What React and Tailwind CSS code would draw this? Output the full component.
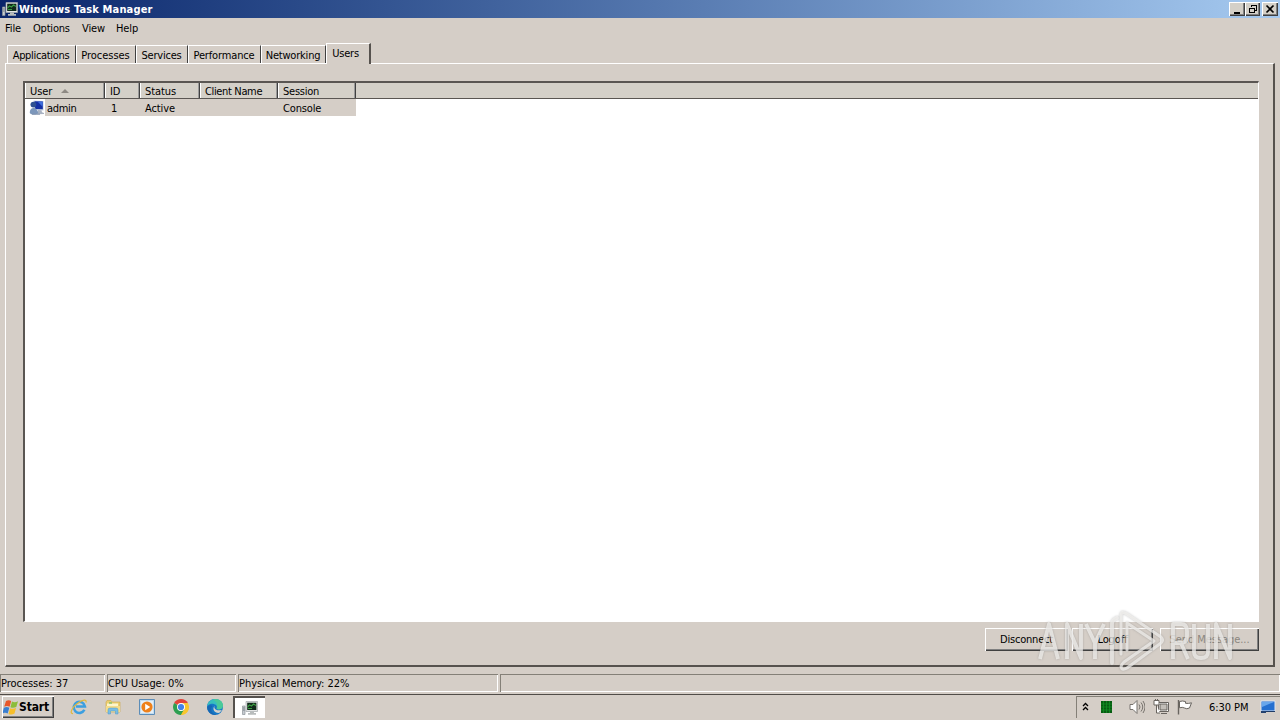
import clsx from 'clsx';

const raised = 'shadow-[inset_1px_1px_0_#fff,inset_-1px_-1px_0_#404040,inset_-2px_-2px_0_#808080]';
const sunken = 'shadow-[inset_1px_1px_0_#848078,inset_-1px_-1px_0_#fff]';

const tabs = [
  { label: 'Applications', box: 'w-[69px] tracking-[-0.32px]' },
  { label: 'Processes', box: 'w-[60px] tracking-[-0.05px]' },
  { label: 'Services', box: 'w-[52px] tracking-[-0.2px]' },
  { label: 'Performance', box: 'w-[73px] tracking-[-0.15px]' },
  { label: 'Networking', box: 'w-[65px] tracking-[-0.2px]' },
];

const columns = [
  { label: 'User', box: 'w-20', sorted: true },
  { label: 'ID', box: 'w-[35px]' },
  { label: 'Status', box: 'w-[60px]' },
  { label: 'Client Name', box: 'w-[78px] tracking-[-0.35px]' },
  { label: 'Session', box: 'w-[78px] tracking-[-0.25px]' },
];

const MonitorIcon = ({ className }) => (
  <svg viewBox="0 0 16 16" className={clsx('h-4 w-4 shrink-0', className)}>
    <path d="M0.5 6h2.5v8.5H.5z" fill="#c6cbd0" stroke="#8d9398" strokeWidth=".7" />
    <path d="M1 8h1.6M1 10h1.6" stroke="#4c555c" strokeWidth=".7" />
    <path d="M4 1.5h11.5v10H4z" fill="#e3e5e5" stroke="#a2a7aa" strokeWidth=".7" />
    <path d="M5.2 2.7h9.2v7.3H5.2z" fill="#10291a" />
    <path d="M5.5 7l2-2 2 1 2-2 2.5 1.5M6 8.5h4" stroke="#3b9b43" strokeWidth="1.1" fill="none" />
    <path d="M8 11.5h4v1.5h2v1.7H6V13h2z" fill="#b8bcbc" />
  </svg>
);

const UserIcon = () => (
  <svg viewBox="0 0 16 16" className="h-4 w-4 shrink-0">
    <path d="M4.5 0.5l10 .4v9.6l-9.2-.6z" fill="#c3cde0" />
    <path d="M5.5 1.2l8.3.4v7.7l-7.6-.4z" fill="#1430a4" />
    <path d="M8.5 1.6l5.3.2-.2 5z" fill="#3f6ddc" />
    <path d="M9 10l3.5.3.5 2 2 .6v1l-7 .4z" fill="#a9b3c3" />
    <circle cx="4.4" cy="4.6" r="2.9" fill="#2e5192" />
    <path d="M0.8 13c0-4 2-5 4-5s4 2 4.5 5c-2 2-7 2-8.5 0z" fill="#7c97bb" />
    <path d="M3 14.2h8" stroke="#8091ab" />
  </svg>
);

const StartIcon = () => (
  <svg viewBox="0 0 16 15" className="h-[15px] w-4 shrink-0">
    <path d="M3 1c2-1.2 3.7-1 5.2 0L6.6 6.8c-1.8-1-3.4-1-5.4 0z" fill="#e8572a" />
    <path d="M9 1.5c1.8 1 3.8.9 6-.2l-1.7 5.6c-2 1-4 1.1-5.9.3z" fill="#8cbd3c" />
    <path d="M.9 7.8c2-1 3.7-.9 5.4 0l-1.6 5.8c-1.5-1-3.4-1-5.4.1z" fill="#3b7fd0" />
    <path d="M7.1 8.2c1.9.9 3.8.8 5.9-.2l-1.5 5.6c-2.1 1.1-4.2 1.1-6 .3z" fill="#f6be2b" />
  </svg>
);

const ExplorerEIcon = () => (
  <svg viewBox="0 0 18 18" className="h-[18px] w-[18px]">
    <path d="M14.4 11.8a5.6 5.6 0 1 1 .5-3.3H6" fill="none" stroke="#3c9fe0" strokeWidth="2.6" />
    <path d="M3 15.5C-1 16 2 9 8 5c5-3.5 9-4 8-.5" fill="none" stroke="#e2b93c" strokeWidth="1.2" />
  </svg>
);

const FolderIcon = () => (
  <svg viewBox="0 0 18 18" className="h-[18px] w-[18px]">
    <path d="M2 4l1-1.5h4L8 4h8v10H2z" fill="#ecce70" stroke="#cda94b" strokeWidth=".6" />
    <path d="M3 5.5h11v3H3z" fill="#fdf5cb" />
    <path d="M5 5h3" stroke="#58b45b" />
    <path d="M2 8h14v6H2z" fill="#f4dc8b" />
    <path d="M4 16v-4q0-2 2-2h6q2 0 2 2v4h-2.5v-3h-5v3z" fill="#79bde4" stroke="#4c9bc9" strokeWidth=".5" />
  </svg>
);

const PlayerIcon = () => (
  <svg viewBox="0 0 18 18" className="h-[18px] w-[18px]">
    <path d="M1.5 1.5h15v15h-15z" fill="#c2ddf1" stroke="#5c8db8" />
    <path d="M3 3h12v12H3z" fill="#e4eff8" />
    <circle cx="9" cy="9" r="5.6" fill="#ee811b" />
    <path d="M7.2 5.7l5 3.3-5 3.3z" fill="#fff" />
  </svg>
);

const ChromeIcon = () => (
  <svg viewBox="0 0 18 18" className="h-[18px] w-[18px]">
    <path d="M9 9L2.1 5A8 8 0 0 1 15.9 5z" fill="#e1443a" />
    <path d="M9 9L2.1 5A8 8 0 0 0 9 17z" fill="#2e9f51" />
    <path d="M9 9V17A8 8 0 0 0 15.9 5H9z" fill="#f8c62e" />
    <path d="M5.5 11L9 17l3.5-6z" fill="#2e9f51" />
    <path d="M9 17l3.5-6V8h4.4A8 8 0 0 1 9 17z" fill="#f8c62e" />
    <circle cx="9" cy="9" r="4" fill="#fff" />
    <circle cx="9" cy="9" r="3.1" fill="#4383e8" />
  </svg>
);

const EdgeIcon = () => (
  <svg viewBox="0 0 18 18" className="h-[18px] w-[18px]">
    <circle cx="9" cy="9" r="8" fill="#1678c6" />
    <path d="M1.2 8C2 3 6 1 9 1c5 0 8 3.4 8 6.5 0 2.6-2 4-4.3 4-1.5 0-2.5-.5-2-1.4C12 7 8 5.5 5.5 5.7 3.5 6 2 7 1.2 8z" fill="#38bfbd" />
    <path d="M10 1.1c4.5.4 7 3.5 7 6.4 0 2.6-2 4-4.3 4-1.5 0-2.5-.5-2-1.4C12.5 6 10 3 7 2z" fill="#54cf86" opacity=".65" />
    <path d="M6.5 8c-3 3.5-.5 8 4 8.8C5 17.5 1 13.5 1.2 9c2-2 4-2.5 5.3-1z" fill="#1767b3" />
    <path d="M9 7.5c-2 2.3.5 6 6.8 4.4-.8 1.5-2.1 2.6-3.4 3.2C8.5 15 5.5 10.5 9 7.5z" fill="#d6d2cb" />
  </svg>
);

const Watermark = () => (
  <svg viewBox="0 0 210 72" className="pointer-events-none absolute top-[604px] left-[1030px] h-[72px] w-[210px] drop-shadow-[0_0_1px_#66666680]">
    <g fill="none" stroke="#f5f4f2" strokeWidth="3.8" opacity=".72" strokeLinejoin="round">
      <path d="M10 55L19 20L28 55M13 45h12" />
      <path d="M37 55V20L51 54V20" />
      <path d="M56 20l9 19v16M74 20l-9 19" />
      <path d="M143 55V20h8q6 0 6 7v5q0 7-6 7h-8M151 39l7 16" />
      <path d="M164 20v28q0 6 7 6t7-6V20" />
      <path d="M186 55V20l14 34V20" />
      <path d="M82 59V20q0-4 5-6" strokeLinecap="round" />
      <path d="M91 50V12q0-6 6-2l34 23q3 3 0 6L97 64q-5 3-6-1 0-2 3-5l30-21L97 19V46" strokeWidth="3" strokeLinecap="round" />
    </g>
  </svg>
);

const WindowButton = ({ children, className }) => (
  <button type="button" className={clsx('flex h-[14px] items-center justify-center bg-[#d4d0c8]', raised, className)}>
    <svg viewBox="0 0 12 12" className="h-3 w-3" fill="none" stroke="#000" shapeRendering="crispEdges">
      {children}
    </svg>
  </button>
);

const PushButton = ({ children, className }) => (
  <button type="button" className={clsx('h-[23px] whitespace-nowrap pb-px text-center', raised, className)}>
    {children}
  </button>
);

export default function App() {
  return (
    <div className="relative flex h-[720px] w-[1280px] flex-col overflow-hidden bg-[#d5cec7] font-['DejaVu_Sans_Condensed','DejaVu_Sans',sans-serif] text-[11px] leading-[13px] tracking-[-0.1px] text-black [font-stretch:condensed]">
      {/* Title bar */}
      <header className="flex h-[18px] items-center bg-linear-to-r from-[#0a246a] to-[#a6caf0] pr-[2px] pl-[2px]">
        <MonitorIcon />
        <h1 className="ml-px grow text-[11px] font-bold tracking-[0.15px] text-white">Windows Task Manager</h1>
        <WindowButton className="w-4">
          <path d="M3 9h6M3 10h6" />
        </WindowButton>
        <WindowButton className="w-[15px]">
          <path d="M4.5 4V2.5h5v5H8M4 2h6M2.5 5.5h5v4h-5zM2 5h6" />
        </WindowButton>
        <WindowButton className="ml-[2px] w-4">
          <path d="M2.5 2.5l7 7M9.5 2.5l-7 7" strokeWidth="1.7" shapeRendering="auto" />
        </WindowButton>
      </header>

      <nav className="flex h-[25px] items-start pt-1 pl-[5px]">
        <span className="w-7">File</span>
        <span className="w-[49px] tracking-[-0.2px]">Options</span>
        <span className="w-[34px]">View</span>
        <span>Help</span>
      </nav>

      {/* Tab strip */}
      <div className="z-10 flex h-[21px] items-end pl-[7px]">
        {tabs.map((tab) => (
          <div
            key={tab.label}
            className={clsx(
              'mb-px flex h-[18px] items-center justify-center border-t border-r border-l border-t-white border-r-[#404040] border-l-white pt-px pr-px whitespace-nowrap',
              tab.box
            )}
          >
            {tab.label}
          </div>
        ))}
        <div className="flex h-[21px] w-[45px] items-center justify-center border-t border-r-2 border-l border-t-white border-r-[#56524e] border-l-white bg-[#d5cec7] pr-[5px] pb-[2px] tracking-[-0.2px]">
          Users
        </div>
      </div>

      {/* Users page */}
      <main className="mx-[5px] -mt-px flex h-[604px] flex-col border-t border-r-2 border-b-2 border-l border-t-white border-r-[#56524e] border-b-[#56524e] border-l-white pt-[17px] pr-[14px] pl-[17px]">
        <div className="h-[541px] w-[1236px] border-t-2 border-r border-b border-l-2 border-t-[#5a5652] border-r-white border-b-white border-l-[#5a5652] bg-white">
          <div className="flex h-4 border-b border-[#5a5652] bg-[#d4d0c8]">
            {columns.map((col) => (
              <div
                key={col.label}
                className={clsx('flex items-center border-r border-r-[#404040] pt-px pl-[5px] shadow-[inset_1px_0_0_#fff,inset_-1px_0_0_#999]', col.box)}
              >
                {col.label}
                {col.sorted && (
                  <svg viewBox="0 0 8 4" className="mb-px ml-[9px] h-1 w-2">
                    <path d="M0 4l4-4 4 4z" fill="#8e8a84" />
                  </svg>
                )}
              </div>
            ))}
          </div>
          <div className="flex h-[17px] w-[331px] items-center">
            <div className="flex w-5 shrink-0 justify-center pl-[3px]">
              <UserIcon />
            </div>
            <div className="flex h-[17px] grow items-center bg-[#d5cec7] pt-[2px]">
              <span className="w-[66px] pl-[2px] tracking-[-0.3px]">admin</span>
              <span className="w-[34px]">1</span>
              <span className="w-[138px]">Active</span>
              <span className="tracking-[-0.15px]">Console</span>
            </div>
          </div>
        </div>
        <div className="mt-[6px] flex justify-end">
          <PushButton className="w-[83px] tracking-[-0.2px]">Disconnect</PushButton>
          <PushButton className="ml-[4px] w-[81px]">Logoff</PushButton>
          <PushButton className="ml-[7px] w-[99px] tracking-[-0.05px] text-[#8b8680]">Send Message...</PushButton>
        </div>
      </main>

      {/* Status bar */}
      <footer className="mt-[7px] flex h-[18px] gap-[2px] tracking-[-0.05px]">
        <div className={clsx('flex w-[105px] items-center pl-px', sunken)}>Processes: 37</div>
        <div className={clsx('flex w-[129px] items-center pl-px', sunken)}>CPU Usage: 0%</div>
        <div className={clsx('flex w-[260px] items-center pl-px', sunken)}>Physical Memory: 22%</div>
        <div className={clsx('grow', sunken)} />
      </footer>

      {/* Taskbar */}
      <div className="mt-[2px] flex h-[26px] border-t border-[#504c48] pt-px pl-[2px]">
        <button type="button" className={clsx('flex h-[22px] w-[52px] items-center pl-px text-[12px] font-bold tracking-[-0.15px]', raised)}>
          <StartIcon />
          <span>Start</span>
        </button>
        <div className="flex h-[22px] items-center gap-4 pl-4">
          <ExplorerEIcon />
          <FolderIcon />
          <PlayerIcon />
          <ChromeIcon />
          <EdgeIcon />
        </div>
        <div className="ml-[9px] flex h-[22px] w-8 items-center justify-center border-t-2 border-l-2 border-[#56524e] bg-white">
          <MonitorIcon className="-mt-px -ml-px" />
        </div>
        <div className="ml-auto flex h-[22px] w-[204px] items-center border-t border-l border-[#848078] pb-px">
          <svg viewBox="0 0 7 9" className="mb-[2px] ml-[5px] h-[9px] w-[7px]" fill="none" stroke="#000" strokeWidth="1.3">
            <path d="M1 4l2.5-2.5L6 4M1 8l2.5-2.5L6 8" />
          </svg>
          <svg viewBox="0 0 11 12" className="ml-[12px] h-3 w-[11px]">
            <path d="M0 0h11v12H0z" fill="#065c12" />
            <path d="M2.5 0v12M5.5 0v12M8.5 0v12M0 3h11M0 6h11M0 9h11" stroke="#119427" strokeWidth=".7" />
          </svg>
          <svg viewBox="0 0 16 16" className="ml-[17px] h-4 w-4" fill="none" stroke="#77736e">
            <path d="M1 5.5h3l4-4v13l-4-4H1z" fill="#fff" />
            <path d="M10 5.5q2 2.5 0 5M12 3.5q3.5 4.5 0 9M14 2q4 6 0 12" />
          </svg>
          <svg viewBox="0 0 16 16" className="ml-2 h-4 w-4" fill="#fff" stroke="#68645f">
            <path d="M5.5 3.5h10v9h-10z" />
            <path d="M7 5h7v6H7z" fill="#c2beb8" />
            <path d="M8 14.5h6M3.5 6v8H7M1 1.5h5V6H1zM2.5 0v2M4.5 0v2" />
          </svg>
          <svg viewBox="0 0 16 16" className="ml-2 h-4 w-4" fill="#fff" stroke="#68645f">
            <path d="M1.5 1v14.5" strokeWidth="1.4" />
            <path d="M2.5 2.5q3-1 6 0v1.8q3 .5 6-.5L12.5 9q-3 1.5-5 0-2-1.2-5-.2z" />
          </svg>
          <span className="ml-4 w-[51px] whitespace-nowrap tracking-[-0.05px]">6:30 PM</span>
          <svg viewBox="0 0 16 14" className="h-[14px] w-4">
            <path d="M1 1h14v10H1z" fill="#256fd0" stroke="#e1e6ee" />
            <path d="M2 2h12L2 7z" fill="#68a6ec" />
            <path d="M1 11h5v2H1z" fill="#24426f" />
            <path d="M6 11.5h9" stroke="#203c66" />
          </svg>
        </div>
      </div>

      <Watermark />
    </div>
  );
}
